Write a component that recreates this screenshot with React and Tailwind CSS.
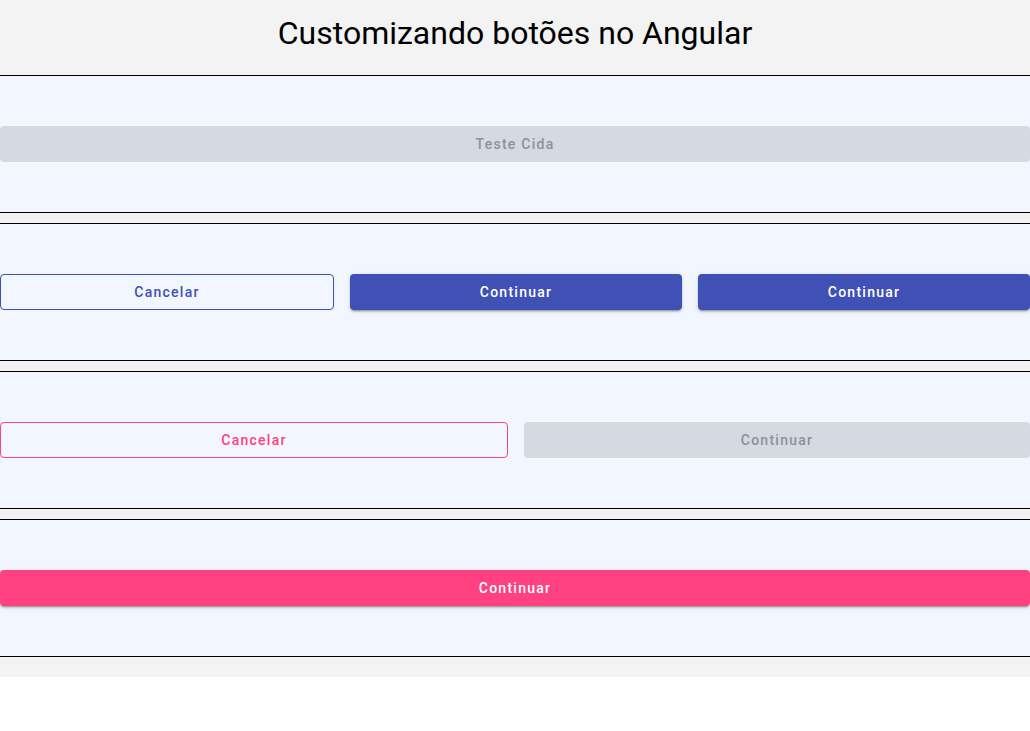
const font = { fontFamily: "Roboto, 'Liberation Sans', sans-serif" };

function Btn({ variant, children }) {
  const base =
    "h-9 flex-1 rounded-[4px] text-[14px] font-medium tracking-[1.25px] flex items-center justify-center";
  const styles = {
    disabled: "bg-[#d5d9e1] text-[#8e9197]",
    blueOutline: "border border-[#3f51b5] text-[#3f51b5] bg-transparent",
    blue: "bg-[#3f51b5] text-white shadow-[0_3px_1px_-2px_rgba(0,0,0,0.2),0_2px_2px_0_rgba(0,0,0,0.14),0_1px_5px_0_rgba(0,0,0,0.12)]",
    pinkOutline: "border border-[#ff4081] text-[#ff4081] bg-transparent",
    pink: "bg-[#ff4081] text-white shadow-[0_3px_1px_-2px_rgba(0,0,0,0.2),0_2px_2px_0_rgba(0,0,0,0.14),0_1px_5px_0_rgba(0,0,0,0.12)]",
  };
  return <button className={`${base} ${styles[variant]}`}>{children}</button>;
}

function Section({ children }) {
  return (
    <section className="border-y border-black bg-[#f2f6fe] py-[50px] flex gap-4 mb-[10px]">
      {children}
    </section>
  );
}

export default function App() {
  return (
    <div style={font} className="bg-white min-h-screen">
      <div className="bg-[#f3f3f3] pb-[10px]">
        <header className="h-[75px] flex items-center justify-center">
          <h1 className="text-[32px] text-black leading-none -mt-[10px]">
            Customizando botões no Angular
          </h1>
        </header>

        <Section>
          <Btn variant="disabled">Teste Cida</Btn>
        </Section>

        <Section>
          <Btn variant="blueOutline">Cancelar</Btn>
          <Btn variant="blue">Continuar</Btn>
          <Btn variant="blue">Continuar</Btn>
        </Section>

        <Section>
          <Btn variant="pinkOutline">Cancelar</Btn>
          <Btn variant="disabled">Continuar</Btn>
        </Section>

        <Section>
          <Btn variant="pink">Continuar</Btn>
        </Section>
      </div>
    </div>
  );
}
